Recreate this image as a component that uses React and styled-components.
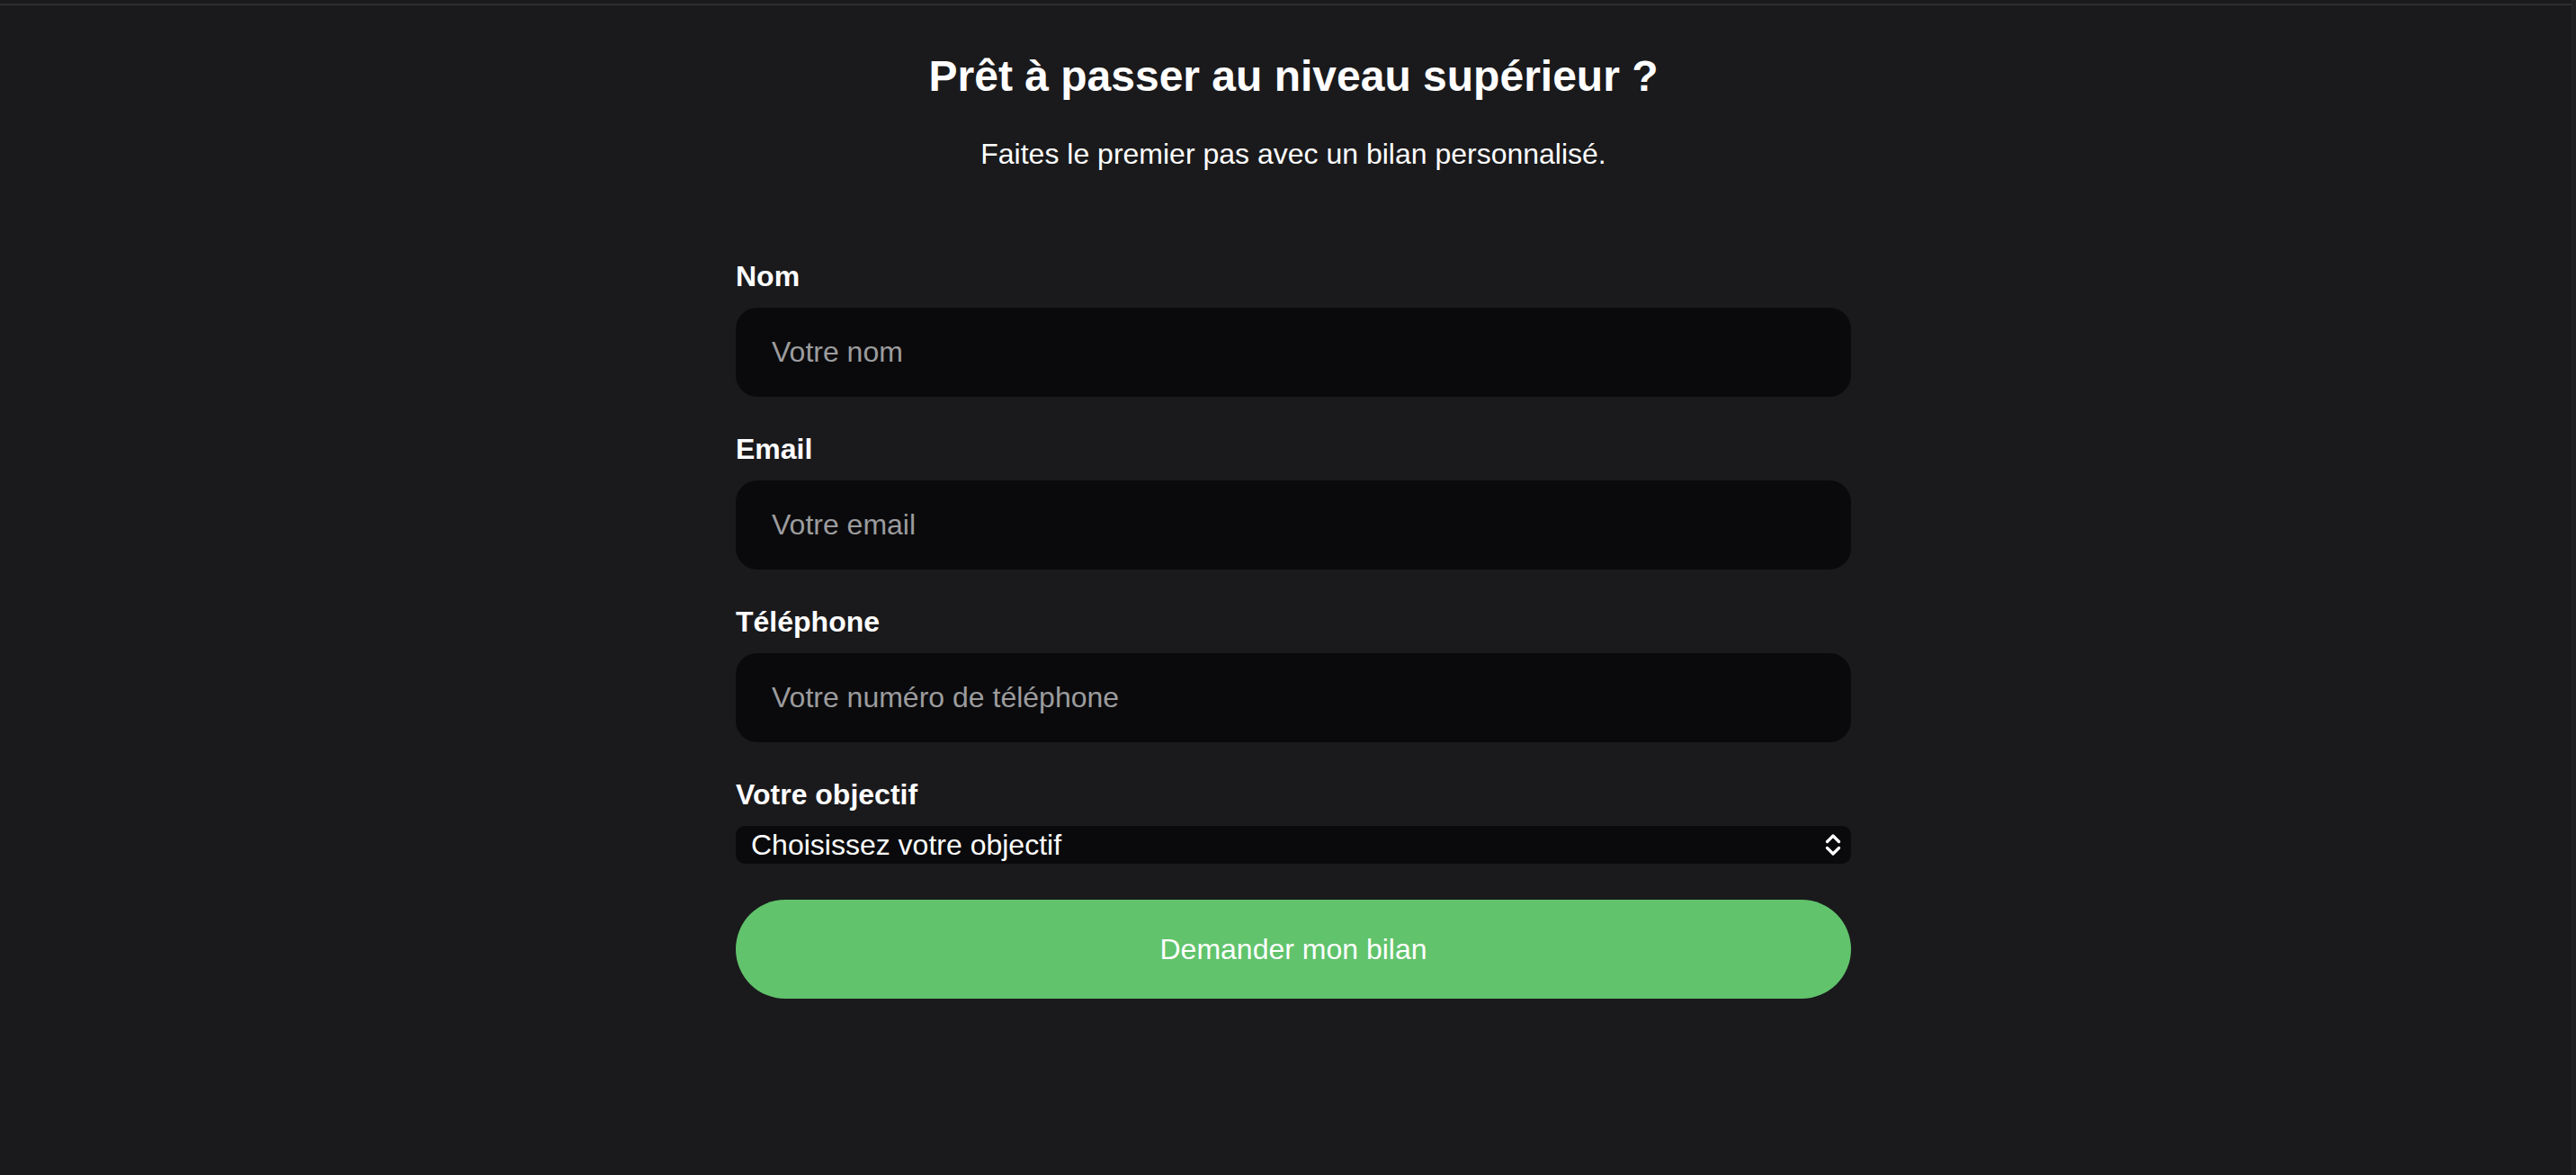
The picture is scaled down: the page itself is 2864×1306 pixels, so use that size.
import React from "react";
import styled, { createGlobalStyle } from "styled-components";

const GlobalStyle = createGlobalStyle`
  html, body {
    margin: 0;
    padding: 0;
    background-color: #1a1a1c;
    min-height: 100%;
  }
  body {
    font-family: "Liberation Sans", Arial, sans-serif;
    color: #ffffff;
  }
  * {
    box-sizing: border-box;
  }
`;

const Page = styled.div`
  min-height: 100vh;
  background-color: #1a1a1c;
`;

const TopRule = styled.div`
  height: 2px;
  margin-top: 4px;
  margin-right: 5px;
  background-color: #2d2d30;
`;

const EdgeStripe = styled.div`
  position: fixed;
  top: 0;
  right: 0;
  width: 5px;
  height: 100vh;
  background-color: #202022;
  border-left: 1px solid #262628;
`;

const Section = styled.section`
  display: flex;
  flex-direction: column;
  align-items: center;
  padding: 51px 0 120px 12px;
`;

const Title = styled.h2`
  margin: 0;
  font-size: 48px;
  font-weight: 700;
  line-height: normal;
  text-align: center;
`;

const Subtitle = styled.p`
  margin: 41px 0 0;
  font-size: 32px;
  line-height: normal;
  text-align: center;
`;

const Form = styled.form`
  width: 1240px;
  margin-top: 99px;
  display: flex;
  flex-direction: column;
`;

const Field = styled.div`
  display: flex;
  flex-direction: column;
  margin-bottom: 40px;
`;

const Label = styled.label`
  display: block;
  font-size: 32px;
  font-weight: 700;
  line-height: normal;
  margin-bottom: 16px;
`;

const Input = styled.input`
  height: 99px;
  width: 100%;
  padding: 0 40px;
  border: none;
  border-radius: 24px;
  background-color: #0a0a0c;
  color: #ffffff;
  font-family: "Liberation Sans", Arial, sans-serif;
  font-size: 32px;
  outline: none;

  &::placeholder {
    color: #9c9c9e;
  }
`;

const SelectWrap = styled.div`
  position: relative;
  width: 100%;
`;

const Select = styled.select`
  appearance: none;
  -webkit-appearance: none;
  width: 100%;
  height: 42px;
  padding: 0 48px 0 17px;
  border: none;
  border-radius: 10px;
  background-color: #0a0a0c;
  color: #ffffff;
  font-family: "Liberation Sans", Arial, sans-serif;
  font-size: 32px;
  outline: none;
`;

const Chevron = styled.svg`
  position: absolute;
  right: 11px;
  top: 9px;
  pointer-events: none;
`;

const SubmitButton = styled.button`
  width: 100%;
  height: 110px;
  border: none;
  border-radius: 55px;
  background-color: #61c36c;
  color: #ffffff;
  font-family: "Liberation Sans", Arial, sans-serif;
  font-size: 32px;
  cursor: pointer;
`;

const fields = [
  { id: "nom", label: "Nom", type: "text", placeholder: "Votre nom" },
  { id: "email", label: "Email", type: "email", placeholder: "Votre email" },
  {
    id: "tel",
    label: "Téléphone",
    type: "tel",
    placeholder: "Votre numéro de téléphone",
  },
];

const App = () => {
  return (
    <Page>
      <GlobalStyle />
      <TopRule />
      <EdgeStripe />
      <Section>
        <Title>Prêt à passer au niveau supérieur ?</Title>
        <Subtitle>Faites le premier pas avec un bilan personnalisé.</Subtitle>
        <Form onSubmit={(e) => e.preventDefault()}>
          {fields.map((f) => (
            <Field key={f.id}>
              <Label htmlFor={f.id}>{f.label}</Label>
              <Input id={f.id} type={f.type} placeholder={f.placeholder} />
            </Field>
          ))}
          <Field>
            <Label htmlFor="objectif">Votre objectif</Label>
            <SelectWrap>
              <Select id="objectif" defaultValue="">
                <option value="">Choisissez votre objectif</option>
                <option value="perte">Perte de poids</option>
                <option value="muscle">Prise de muscle</option>
                <option value="forme">Remise en forme</option>
              </Select>
              <Chevron width="18" height="24" viewBox="0 0 18 24" fill="none">
                <path
                  d="M2.5 8.5 L9 2 L15.5 8.5 M2.5 15.5 L9 22 L15.5 15.5"
                  stroke="#ffffff"
                  strokeWidth="3.2"
                  strokeLinecap="round"
                  strokeLinejoin="round"
                />
              </Chevron>
            </SelectWrap>
          </Field>
          <SubmitButton type="submit">Demander mon bilan</SubmitButton>
        </Form>
      </Section>
    </Page>
  );
};

export default App;
